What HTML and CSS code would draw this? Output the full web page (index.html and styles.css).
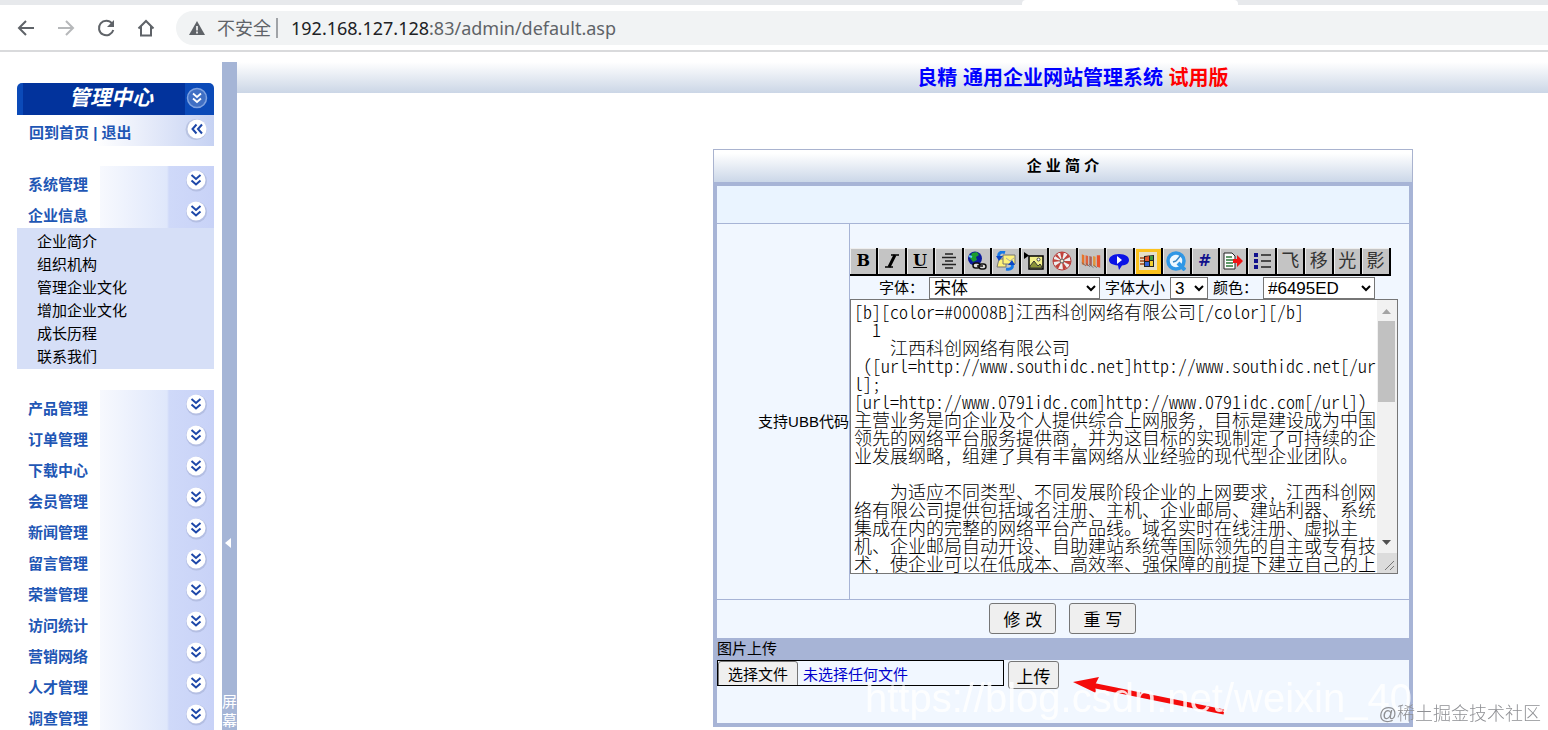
FILE: index.html
```html
<!DOCTYPE html>
<html lang="zh-CN">
<head>
  <meta charset="UTF-8">
  <meta name="viewport" content="width=device-width, initial-scale=1">
  <title>企业网站管理系统</title>
  <link rel="stylesheet" href="styles.css">
</head>
<body>

  <!-- shared shapes -->
  <svg class="defs" width="0" height="0" aria-hidden="true">
    <symbol id="chev" viewBox="0 0 24 24">
      <circle cx="12.5" cy="13" r="10.5" fill="#8d98bd" opacity=".35"/>
      <circle cx="12" cy="12" r="9.5" fill="#fff"/>
      <path d="M7.500 7l4.500 4 4.500-4M7.500 12.500l4.500 4 4.500-4" fill="none" stroke="#1d47a8" stroke-width="2"/>
    </symbol>
  </svg>

  <!-- ===== Browser bar ===== -->
  <header class="browser">
    <div class="tabs"><div class="tab"></div></div>
    <div class="address">
      <button class="nav-btn" aria-label="后退"><svg viewBox="0 0 20 20"><path d="M18 10H3M10 3l-7 7 7 7"/></svg></button>
      <button class="nav-btn off" aria-label="前进"><svg viewBox="0 0 20 20"><path d="M2 10h15M10 3l7 7-7 7"/></svg></button>
      <button class="nav-btn" aria-label="刷新"><svg viewBox="0 0 20 20"><path d="M16 5.5A7.3 7.3 0 1 0 17.3 12"/><path d="M18 2v7h-7z" fill="#5f6368" stroke="none"/></svg></button>
      <button class="nav-btn" aria-label="主页"><svg viewBox="0 0 20 20"><path d="M2.5 10.5L10 3l7.500 7.500M5 8.500V17.500h10V8.500"/></svg></button>
      <div class="url">
        <svg class="warn" viewBox="0 0 16 14"><path d="M8 0l8 14H0z" fill="#5f6368"/><path d="M8 5v4.500M8 10.500v2" stroke="#fff" stroke-width="1.600"/></svg>
        <span class="unsafe">不安全</span>
        <span class="path"><b>192.168.127.128</b>:83/admin/default.asp</span>
      </div>
    </div>
  </header>

  <div class="shell">

    <!-- ===== Left menu ===== -->
    <nav class="side">
      <div class="side-title">
        <span>管理中心</span>
        <svg viewBox="0 0 24 24"><circle cx="12" cy="12" r="9.500" fill="#3f6fc4" stroke="#7fa2e0" stroke-width="1.500"/><path d="M8 7.500l4 3.500 4-3.500M8 12.500l4 3.500 4-3.500" fill="none" stroke="#fff" stroke-width="1.800"/></svg>
      </div>
      <div class="side-home">
        <span><a href="#">回到首页</a> | <a href="#">退出</a></span>
        <svg class="left" viewBox="0 0 24 24"><use href="#chev"/></svg>
      </div>

      <div class="group">
        <a class="item" href="#">系统管理<svg><use href="#chev"/></svg></a>
        <a class="item" href="#">企业信息<svg><use href="#chev"/></svg></a>
        <div class="sub">
          <a href="#">企业简介</a>
          <a href="#">组织机构</a>
          <a href="#">管理企业文化</a>
          <a href="#">增加企业文化</a>
          <a href="#">成长历程</a>
          <a href="#">联系我们</a>
        </div>
      </div>

      <div class="group">
        <a class="item" href="#">产品管理<svg><use href="#chev"/></svg></a>
        <a class="item" href="#">订单管理<svg><use href="#chev"/></svg></a>
        <a class="item" href="#">下载中心<svg><use href="#chev"/></svg></a>
        <a class="item" href="#">会员管理<svg><use href="#chev"/></svg></a>
        <a class="item" href="#">新闻管理<svg><use href="#chev"/></svg></a>
        <a class="item" href="#">留言管理<svg><use href="#chev"/></svg></a>
        <a class="item" href="#">荣誉管理<svg><use href="#chev"/></svg></a>
        <a class="item" href="#">访问统计<svg><use href="#chev"/></svg></a>
        <a class="item" href="#">营销网络<svg><use href="#chev"/></svg></a>
        <a class="item" href="#">人才管理<svg><use href="#chev"/></svg></a>
        <a class="item" href="#">调查管理<svg><use href="#chev"/></svg></a>
      </div>
    </nav>

    <!-- ===== Splitter ===== -->
    <div class="split">
      <svg viewBox="0 0 6 10"><path d="M6 0v10L0 5z" fill="#fff"/></svg>
      <span>屏幕</span>
    </div>

    <!-- ===== Content ===== -->
    <div class="frame">
      <main class="main">
        <h1>良精 通用企业网站管理系统 <em>试用版</em></h1>

        <div class="panel">
          <h2>企 业 简 介</h2>
          <div class="form">
            <div class="blank"></div>

            <div class="row">
              <label class="name" for="content">支持UBB代码</label>
              <div class="editor">
                <div class="tools">
                  <button aria-label="粗体"><b>B</b></button>
                  <button aria-label="斜体"><svg viewBox="0 0 20 20"><path d="M13 4L7 16" stroke="#000" stroke-width="3"/><path d="M9 4h8M3 16h8" stroke="#000" stroke-width="1.500"/></svg></button>
                  <button aria-label="下划线"><u>U</u></button>
                  <button aria-label="居中"><svg viewBox="0 0 20 20"><path d="M6 3h8M3 6.500h14M6 10h8M3 13.500h14M6 17h8" stroke="#222" stroke-width="1.400"/></svg></button>
                  <button aria-label="超链接"><svg viewBox="0 0 20 20"><circle cx="8" cy="7.500" r="7" fill="#0a1a9c"/><path d="M5 2l5-1 2 3-3 2 1 3-4 2-3-4z" fill="#1c9c2c"/><path d="M2 5l3 1" stroke="#5ac8ff" stroke-width="2"/><rect x="6" y="12" width="7" height="5" rx="2.500" fill="#ddd" stroke="#111" stroke-width="1.500"/><rect x="12" y="13" width="7" height="5" rx="2.500" fill="#ddd" stroke="#111" stroke-width="1.500"/><path d="M10 15h6" stroke="#111" stroke-width="1.500"/></svg></button>
                  <button aria-label="邮件"><svg viewBox="0 0 20 20"><path d="M3 8h7v8H1z" fill="#fff27a" stroke="#777"/><path d="M7 4h12v9H7z" fill="#fff27a" stroke="#777"/><path d="M10 7l4 3 4-3" fill="none" stroke="#aaa"/><path d="M9 1.500C4 0 2 3 3 6" fill="none" stroke="#1679e8" stroke-width="3"/><path d="M0 5h7L3 10z" fill="#0b46c4"/><path d="M10 18c6 1 7-2 6-5" fill="none" stroke="#1679e8" stroke-width="3"/><path d="M12 14h7l-3-5z" fill="#0b46c4"/></svg></button>
                  <button aria-label="图片"><svg viewBox="0 0 20 20"><path d="M0 1l5 3.500L0 8z"/><rect x="5" y="5" width="14" height="13" fill="#f3f08a" stroke="#000" stroke-width="1.500"/><path d="M6 17v-2l4-5 4 5 2-2 2 3v1z" fill="#8c9438" stroke="#333"/><circle cx="14.500" cy="8.500" r="1.500" fill="#fff" stroke="#444"/></svg></button>
                  <button aria-label="Flash"><svg viewBox="0 0 20 20"><circle cx="10" cy="10" r="9" fill="#eee" stroke="#b33a3a"/><path d="M10 10L8 1l4 0zM10 10l6-7 2 3zM10 10l9 0-1 4zM10 10l5 7-4 2zM10 10l-4 8-3-3zM10 10L1 11l0-3zM10 10L3 5l2-2z" fill="#c0433c"/><circle cx="10" cy="10" r="2" fill="#efe6d0" stroke="#555"/></svg></button>
                  <button aria-label="Shockwave"><svg viewBox="0 0 24 20"><path d="M1 2l3 1v12l-3-1z" fill="#e8752a"/><path d="M5.500 3l3 1v12l-3-1z" fill="#e0603a"/><path d="M10 4l3 1v11l-3-1z" fill="#a8605a"/><path d="M14.500 4l3 1v12l-3-1z" fill="#e2943a"/><path d="M19 3h4v15l-4-1z" fill="#e8502c"/><path d="M1 12l5 4M6 13l5 4M10 14l5 4M15 15l4 3" stroke="#666"/></svg></button>
                  <button aria-label="RealPlayer"><svg viewBox="0 0 20 20"><path d="M10 3c6 0 10 2.500 10 6s-3 5-7 5.500L10 19l-1-4.500C3 14 0 12 0 9s4-6 10-6z" fill="#0a12e6"/><path d="M8 5v8l5-4z" fill="#fff"/></svg></button>
                  <button aria-label="Media Player" class="wmp"><svg viewBox="0 0 20 20"><rect x="1" y="1" width="18" height="18" fill="#e6e0c8"/><path d="M6 5l10-1v12H6z" fill="#222"/><path d="M7 6l4-1v5H7z" fill="#e2552b"/><path d="M12 5h3v4h-3z" fill="#3b9c3a"/><path d="M7 11h4v4H7z" fill="#3364d6"/><path d="M12 10h3v5h-3z" fill="#f2cf2f"/><path d="M2 7h4M2 10h4M2 13h4" stroke="#a04818" stroke-width="1.500"/></svg></button>
                  <button aria-label="QuickTime"><svg viewBox="0 0 20 20"><circle cx="10" cy="10" r="8" fill="#eef8ff" stroke="#2f97e6" stroke-width="3.500"/><path d="M10 10l5-6M10 10l-3 1" stroke="#3a87c4" stroke-width="1.500"/><path d="M12 12l7 7" stroke="#2f97e6" stroke-width="4"/></svg></button>
                  <button aria-label="代码"><b class="hash">#</b></button>
                  <button aria-label="引用"><svg viewBox="0 0 20 20"><path d="M1 2h8l3 3v13H1z" fill="#fff" stroke="#222"/><path d="M3 6h6M3 9h7M3 12h7M3 15h7" stroke="#2c7a3a" stroke-width="1.400"/><path d="M10 8h4V4l6 6-6 6v-4h-4z" fill="#f01414"/></svg></button>
                  <button aria-label="列表"><svg viewBox="0 0 20 20"><path d="M2 2h4v4H2zM2 8h4v4H2zM2 14h4v4H2z" fill="#10108c"/><path d="M9 4h10M9 10h10M9 16h10" stroke="#222" stroke-width="1.500"/></svg></button>
                  <button>飞</button>
                  <button>移</button>
                  <button>光</button>
                  <button>影</button>
                </div>

                <div class="options">
                  <label for="font">字体：</label>
                  <select id="font" class="font"><option>宋体</option></select>
                  <label for="size">字体大小</label>
                  <select id="size" class="size"><option>3</option></select>
                  <label for="color">颜色：</label>
                  <select id="color" class="color"><option>#6495ED</option></select>
                </div>

                <div class="box">
                  <textarea id="content" wrap="off" spellcheck="false">[b][color=#00008B]江西科创网络有限公司[/color][/b]
  1
    江西科创网络有限公司
 （[url=http://www.southidc.net]http://www.southidc.net[/ur
l];
[url=http://www.0791idc.com]http://www.0791idc.com[/url]）
主营业务是向企业及个人提供综合上网服务， 目标是建设成为中国
领先的网络平台服务提供商， 并为这目标的实现制定了可持续的企
业发展纲略， 组建了具有丰富网络从业经验的现代型企业团队。

    为适应不同类型、不同发展阶段企业的上网要求， 江西科创网
络有限公司提供包括域名注册、主机、企业邮局、建站利器、系统
集成在内的完整的网络平台产品线。域名实时在线注册、虚拟主
机、企业邮局自动开设、自助建站系统等国际领先的自主或专有技
术， 使企业可以在低成本、高效率、强保障的前提下建立自己的上</textarea>
                  <div class="scroll">
                    <svg viewBox="0 0 9 5"><path d="M0 5h9L4.500 0z" fill="#a3a3a3"/></svg>
                    <div class="track"><div class="thumb"></div></div>
                    <svg viewBox="0 0 9 5"><path d="M0 0h9L4.500 5z" fill="#505050"/></svg>
                    <svg class="grip" viewBox="0 0 20 20"><path d="M8 17L17 8M13 17l4-4" stroke="#777"/></svg>
                  </div>
                </div>
              </div>
            </div>

            <div class="actions">
              <button>修 改</button>
              <button>重 写</button>
            </div>

            <div class="upload-title">图片上传</div>
            <div class="upload">
              <label class="file">
                <input type="file">
                <span class="pick">选择文件</span>
                <span>未选择任何文件</span>
              </label>
              <button>上传</button>
              <svg class="arrow" viewBox="0 0 160 40"><path d="M18 10L151 37" stroke="#f40b0b" stroke-width="5"/><path d="M0 7l26-5-4 8 1 8z" fill="#f40b0b"/></svg>
              <div class="mark">https://blog.csdn.net/weixin_404</div>
            </div>
          </div>
        </div>
      </main>
    </div>
  </div>

  <div class="credit">@稀土掘金技术社区</div>

</body>
</html>
```
FILE: styles.css
```css
/* ===== Base ===== */
* {
  box-sizing: border-box;
}
body {
  margin: 0;
  height: 100vh;
  display: flex;
  flex-direction: column;
  overflow: hidden;
  position: relative;
  background: #fff;
  color: #000;
  font: 15px/20px "Liberation Sans", "Noto Sans CJK SC", sans-serif;
}
a {
  color: inherit;
  text-decoration: none;
}
button, select, textarea {
  margin: 0;
  color: #000;
  font-family: inherit;
}
.defs {
  position: absolute;
}

/* ===== Browser bar ===== */
.browser {
  flex: none;
  border-bottom: 2px solid #d9dadc;
  background: #fff;
}
.tabs {
  height: 5px;
  background: #e7e9ec;
}
.tab {
  width: 14%;
  height: 5px;
  margin-left: 66%;
  background: #fff;
  border-radius: 4px 4px 0 0;
}
.address {
  display: flex;
  align-items: center;
  gap: 20px;
  height: 45px;
  padding-left: 16px;
}
.nav-btn {
  width: 20px;
  height: 20px;
  padding: 0;
  border: 0;
  background: none;
}
.nav-btn svg {
  display: block;
  fill: none;
  stroke: #5f6368;
  stroke-width: 2;
}
.nav-btn.off {
  opacity: .45;
}
.url {
  flex: 1;
  display: flex;
  align-items: center;
  height: 34px;
  padding-left: 13px;
  border-radius: 17px 0 0 17px;
  background: #f1f3f4;
  color: #5f6368;
  font-family: "Noto Sans", "Noto Sans CJK SC", sans-serif;
  font-size: 18px;
}
.url b {
  color: #202124;
  font-weight: 400;
}
.warn {
  width: 16px;
  margin-right: 12px;
}
.unsafe {
  padding-right: 5px;
  margin-right: 13px;
  border-right: 2px solid #a0a3a7;
}

/* ===== Left menu ===== */
.shell {
  flex: 1;
  display: flex;
  min-height: 0;
  padding-top: 10px;
}
.side {
  flex: none;
  width: 222px;
  padding: 21px 8px 0 17px;
  overflow: hidden;
}
.side-title, .side-home, .item {
  display: flex;
  align-items: center;
  justify-content: space-between;
}
.side svg {
  width: 24px;
  height: 24px;
}
.side-title {
  height: 32px;
  padding: 0 5px 2px 52px;
  border-radius: 5px 5px 0 0;
  background: linear-gradient(to right, #0b4ab8, #0b4ab8 6px, #02339c 6px, #02339c 168px, #0b4ab8 168px);
  color: #fff;
  font-size: 21px;
  font-weight: 700;
  font-style: italic;
}
.side-home {
  height: 31px;
  margin-bottom: 20px;
  padding: 0 5px 3px 12px;
  background: linear-gradient(to right, #fff 40%, #c6d2f3);
  color: #1f57b5;
  font-weight: 700;
}
.side-home span {
  padding-top: 8px;
}
.side-home .left {
  transform: rotate(90deg);
}
.group {
  margin-bottom: 21px;
}
.item {
  align-items: flex-start;
  height: 31px;
  padding: 2px 6px 0 11px;
  background: linear-gradient(to right, #fff 83px, #f7f9fe 83px, #dfe7fb 150px, #cfd9f9 152px, #c8d2f7);
  color: #1f57b5;
  font-weight: 700;
  line-height: 34px;
}
.sub {
  padding: 2px 0 1px 20px;
  background: #d6dff7;
}
.sub a {
  display: block;
  line-height: 23px;
}

/* ===== Splitter ===== */
.split {
  flex: none;
  width: 15px;
  display: flex;
  flex-direction: column;
  justify-content: flex-end;
  gap: 144px;
  background: #a5b5d6;
  color: #fff;
  line-height: 19px;
}
.split svg {
  width: 6px;
  height: 10px;
  margin-left: 3px;
}
.split span {
  width: 15px;
}

/* ===== Content ===== */
.frame {
  flex: 1;
  min-width: 0;
  overflow: hidden;
}
.main {
  width: 126%;
}
.main h1 {
  height: 31px;
  margin: 0 0 56px;
  padding-left: 20px;
  background: linear-gradient(#fff, #cbd6e6);
  color: #00f;
  font-size: 20px;
  line-height: 33px;
  text-align: center;
}
.main h1 em {
  color: #f00;
  font-style: normal;
}
.panel {
  width: 700px;
  margin: 0 auto;
}
.panel h2 {
  margin: 0;
  border: 1px solid #a9b3cf;
  border-bottom: 0;
  background: linear-gradient(#fff 10%, #cbd7e8);
  font-size: 15px;
  line-height: 32px;
  text-align: center;
}
.form {
  border: 4px solid #a7b4d6;
  background: #f1f7ff;
}
.blank {
  height: 38px;
  background: #eaf4ff;
  border-bottom: 1px solid #a7b4d6;
}
.row {
  display: flex;
  border-bottom: 1px solid #a7b4d6;
}
.name {
  flex: none;
  display: flex;
  align-items: center;
  justify-content: flex-end;
  width: 133px;
  padding-top: 20px;
  border-right: 1px solid #a7b4d6;
}
.editor {
  flex: 1;
  padding: 24px 11px 25px 0;
}

/* toolbar */
.tools {
  display: flex;
  width: 541px;
  background: #000;
}
.tools button {
  flex: 1;
  display: flex;
  align-items: center;
  justify-content: center;
  height: 28px;
  padding: 0;
  border: solid #000;
  border-width: 0 2px 2px 0;
  box-shadow: inset 1px 1px #eee;
  background: #c4c4c4;
  color: #333;
  font-family: "DejaVu Serif", "Noto Sans CJK SC", serif;
  font-size: 18px;
  line-height: 20px;
}
.tools b, .tools u {
  color: #000;
  font-size: 16px;
  font-weight: 700;
}
.tools .hash {
  color: #10108c;
}
.tools svg {
  width: 20px;
  height: 20px;
}
.tools .wmp {
  background: #fbc21e;
}

/* drop-downs */
.options {
  display: flex;
  align-items: center;
  gap: 5px;
  height: 23px;
  padding-left: 29px;
}
.options select {
  height: 22px;
  padding: 0;
  border: 1px solid #767676;
  background: #fff;
  font-size: 17px;
}
.options .font {
  width: 171px;
}
.options .size {
  width: 38px;
}
.options .color {
  width: 112px;
}

.box {
  position: relative;
}
textarea {
  display: block;
  width: 100%;
  height: 275px;
  padding: 2px 20px 2px 3px;
  border: 1px solid #767676;
  background: #fff;
  overflow: hidden;
  resize: none;
  white-space: pre;
  font-family: "Noto Sans CJK SC", sans-serif;
  font-size: 18px;
  font-weight: 300;
  font-feature-settings: "hwid" 1;
  line-height: 18px;
}
.scroll {
  position: absolute;
  top: 1px;
  right: 1px;
  bottom: 1px;
  width: 20px;
  display: flex;
  flex-direction: column;
  align-items: center;
  padding-top: 9px;
  background: #f1f1f1;
}
.scroll svg {
  flex: none;
  width: 9px;
  height: 5px;
}
.track {
  flex: 1;
  padding: 7px 0;
}
.thumb {
  width: 17px;
  height: 81px;
  background: #c1c1c1;
}
.scroll .grip {
  width: 20px;
  height: 20px;
  margin-top: 8px;
  background: #dcdcdc;
}

/* buttons under the editor */
.actions {
  display: flex;
  justify-content: center;
  gap: 13px;
  padding: 3px 0 4px;
}
.actions button, .upload button {
  border: 1px solid #767676;
  border-radius: 3px;
  background: #efefef;
  font-size: 17px;
}
.actions button {
  width: 67px;
  height: 31px;
}

/* upload */
.upload-title {
  height: 22px;
  background: #a7b4d6;
  line-height: 22px;
}
.upload {
  position: relative;
  display: flex;
  align-items: flex-start;
  gap: 4px;
  height: 63px;
}
.file {
  position: relative;
  display: flex;
  gap: 5px;
  width: 287px;
  height: 26px;
  border: 1px solid #000;
  color: #00c;
  line-height: 28px;
  overflow: hidden;
}
.file input {
  position: absolute;
  inset: 0;
  opacity: 0;
}
.pick {
  width: 80px;
  height: 28px;
  border: 1px solid #767676;
  border-radius: 3px;
  background: #efefef;
  color: #000;
  line-height: 26px;
  text-align: center;
}
.upload button {
  width: 51px;
  height: 28px;
  margin-top: 1px;
  padding: 0;
}
.arrow {
  position: absolute;
  left: 356px;
  top: 15px;
  width: 160px;
  height: 40px;
}
.mark {
  position: absolute;
  left: 148px;
  top: 14px;
  color: rgba(255, 255, 255, .85);
  font-size: 40px;
  line-height: 48px;
  white-space: nowrap;
}

/* ===== Credit ===== */
.credit {
  position: absolute;
  right: 7px;
  bottom: 6px;
  color: #8f9094;
  font-size: 18px;
  font-weight: 300;
}
```
